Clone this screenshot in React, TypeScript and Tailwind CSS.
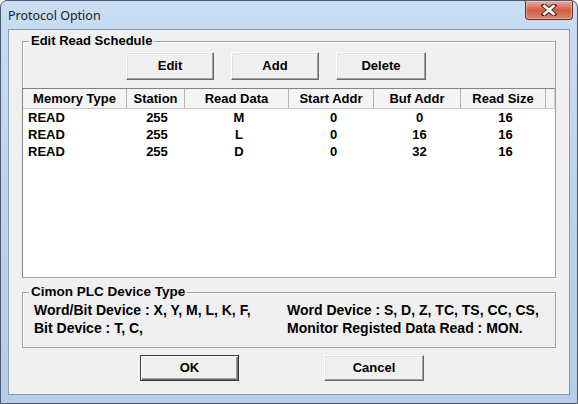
import React from "react";

interface ScheduleRow {
  memoryType: string;
  station: string;
  readData: string;
  startAddr: string;
  bufAddr: string;
  readSize: string;
}

const columns: { label: string; width: number }[] = [
  { label: "Memory Type", width: 104 },
  { label: "Station", width: 58 },
  { label: "Read Data", width: 104 },
  { label: "Start Addr", width: 85 },
  { label: "Buf Addr", width: 87 },
  { label: "Read Size", width: 85 },
];

const rows: ScheduleRow[] = [
  { memoryType: "READ", station: "255", readData: "M", startAddr: "0", bufAddr: "0", readSize: "16" },
  { memoryType: "READ", station: "255", readData: "L", startAddr: "0", bufAddr: "16", readSize: "16" },
  { memoryType: "READ", station: "255", readData: "D", startAddr: "0", bufAddr: "32", readSize: "16" },
];

const bodyFont = { fontFamily: '"Liberation Sans", Arial, sans-serif' };

const ClassicButton: React.FC<{ label: string; w: string; isDefault?: boolean }> = ({
  label,
  w,
  isDefault,
}) => (
  <button
    className={
      isDefault
        ? `${w} h-[26px] bg-[#f0f0f0] border border-[#3c3c3c] shadow-[inset_1px_1px_0_#ffffff,inset_-1px_-1px_0_#696969,inset_-2px_-2px_0_#a0a0a0] text-[13px] font-bold text-black`
        : `${w} border-t border-l border-t-white border-l-white border-r border-b border-r-[#696969] border-b-[#696969] bg-[#f0f0f0] shadow-[inset_-1px_-1px_0_#a0a0a0,inset_1px_1px_0_#e3e3e3] text-[13px] font-bold text-black`
    }
  >
    {label}
  </button>
);

const CloseButton: React.FC = () => (
  <div className="w-[48px] h-[19px] rounded-b-[4px] border border-t-0 border-[#6b2b22] bg-gradient-to-b from-[#e9b1a4] via-[#d45a42] to-[#d98470] shadow-[inset_0_0_0_1px_rgba(255,220,210,0.45)] flex items-center justify-center">
    <svg width="16" height="12" viewBox="0 0 16 12">
      <path d="M3 1.5 L13 10.5 M13 1.5 L3 10.5" stroke="#4a2a26" strokeWidth="4.6" strokeLinecap="square" />
      <path d="M3.4 2 L12.6 10 M12.6 2 L3.4 10" stroke="#ffffff" strokeWidth="2.6" strokeLinecap="square" />
    </svg>
  </div>
);

export default function App() {
  return (
    <div
      className="w-[578px] h-[404px] rounded-t-[7px] border border-[#4b5a6e] bg-gradient-to-b from-[#c9def4] via-[#bad3ee] to-[#b5cfeb] flex flex-col"
      style={bodyFont}
    >
      {/* title bar */}
      <div className="h-[28px] flex justify-between pl-[7px] pr-[4px]">
        <span
          className="self-center pt-[3px] text-[12.5px] text-[#1b1b1b]"
          style={{ fontFamily: '"Noto Sans", "Open Sans", sans-serif' }}
        >
          Protocol Option
        </span>
        <CloseButton />
      </div>

      {/* client area */}
      <div className="flex-1 mx-[7px] mb-[8px] bg-[#f0f0f0] border border-[#8a9cb2] flex flex-col px-[13px]">
        {/* Edit Read Schedule group */}
        <div className="relative mt-[11px] h-[47px] border border-b-0 border-[#a0a0a0] shadow-[inset_1px_1px_0_#ffffff]">
          <span className="absolute -top-[9px] left-[6px] px-[2px] bg-[#f0f0f0] text-[13px] leading-[16px] font-bold text-black">
            Edit Read Schedule
          </span>
          <div className="flex gap-[17px] pl-[103px] pt-[10px] h-[38px]">
            <ClassicButton label="Edit" w="w-[88px]" />
            <ClassicButton label="Add" w="w-[88px]" />
            <ClassicButton label="Delete" w="w-[90px]" />
          </div>
        </div>

        {/* list view */}
        <div className="h-[190px] bg-white border border-t-[#828282] border-l-[#828282] border-r-[#a0a0a0] border-b-[#a0a0a0] flex flex-col">
          <div className="h-[20px] flex bg-[#f4f4f4] border-b border-[#c8c8c8]">
            {columns.map((c) => (
              <div
                key={c.label}
                className="flex items-center justify-center border-r border-[#b4b4b4] text-[13px] font-bold text-black"
                style={{ width: c.width }}
              >
                {c.label}
              </div>
            ))}
            <div className="flex-1 border-r border-[#d0d0d0]" />
          </div>
          {rows.map((r, i) => (
            <div key={i} className="h-[17px] flex items-center text-[13px] font-bold text-black leading-[17px]">
              <div className="w-[104px] pl-[5px]">{r.memoryType}</div>
              <div className="w-[58px] text-center pl-[2px]">{r.station}</div>
              <div className="w-[104px] text-center pl-[4px]">{r.readData}</div>
              <div className="w-[85px] text-center pl-[4px]">{r.startAddr}</div>
              <div className="w-[87px] text-center pl-[4px]">{r.bufAddr}</div>
              <div className="w-[85px] text-center pl-[4px]">{r.readSize}</div>
            </div>
          ))}
        </div>

        {/* Cimon PLC Device Type group */}
        <div className="relative mt-[14px] h-[56px] border border-[#a0a0a0] shadow-[inset_1px_1px_0_#ffffff]">
          <span className="absolute -top-[9px] left-[6px] px-[2px] bg-[#f0f0f0] text-[13.5px] leading-[16px] font-bold text-black">
            Cimon PLC Device Type
          </span>
          <div className="grid grid-cols-[253px_1fr] gap-y-0 pl-[11px] pt-[8px] text-[14px] leading-[18px] font-bold text-black">
            <span>Word/Bit Device : X, Y, M, L, K, F,</span>
            <span>Word Device : S, D, Z, TC, TS, CC, CS,</span>
            <span>Bit Device : T, C,</span>
            <span>Monitor Registed Data Read : MON.</span>
          </div>
        </div>

        {/* dialog buttons */}
        <div className="flex gap-[85px] pl-[118px] mt-[7px]">
          <ClassicButton label="OK" w="w-[99px]" isDefault />
          <div className="h-[26px] flex">
            <ClassicButton label="Cancel" w="w-[100px]" />
          </div>
        </div>
      </div>
    </div>
  );
}
